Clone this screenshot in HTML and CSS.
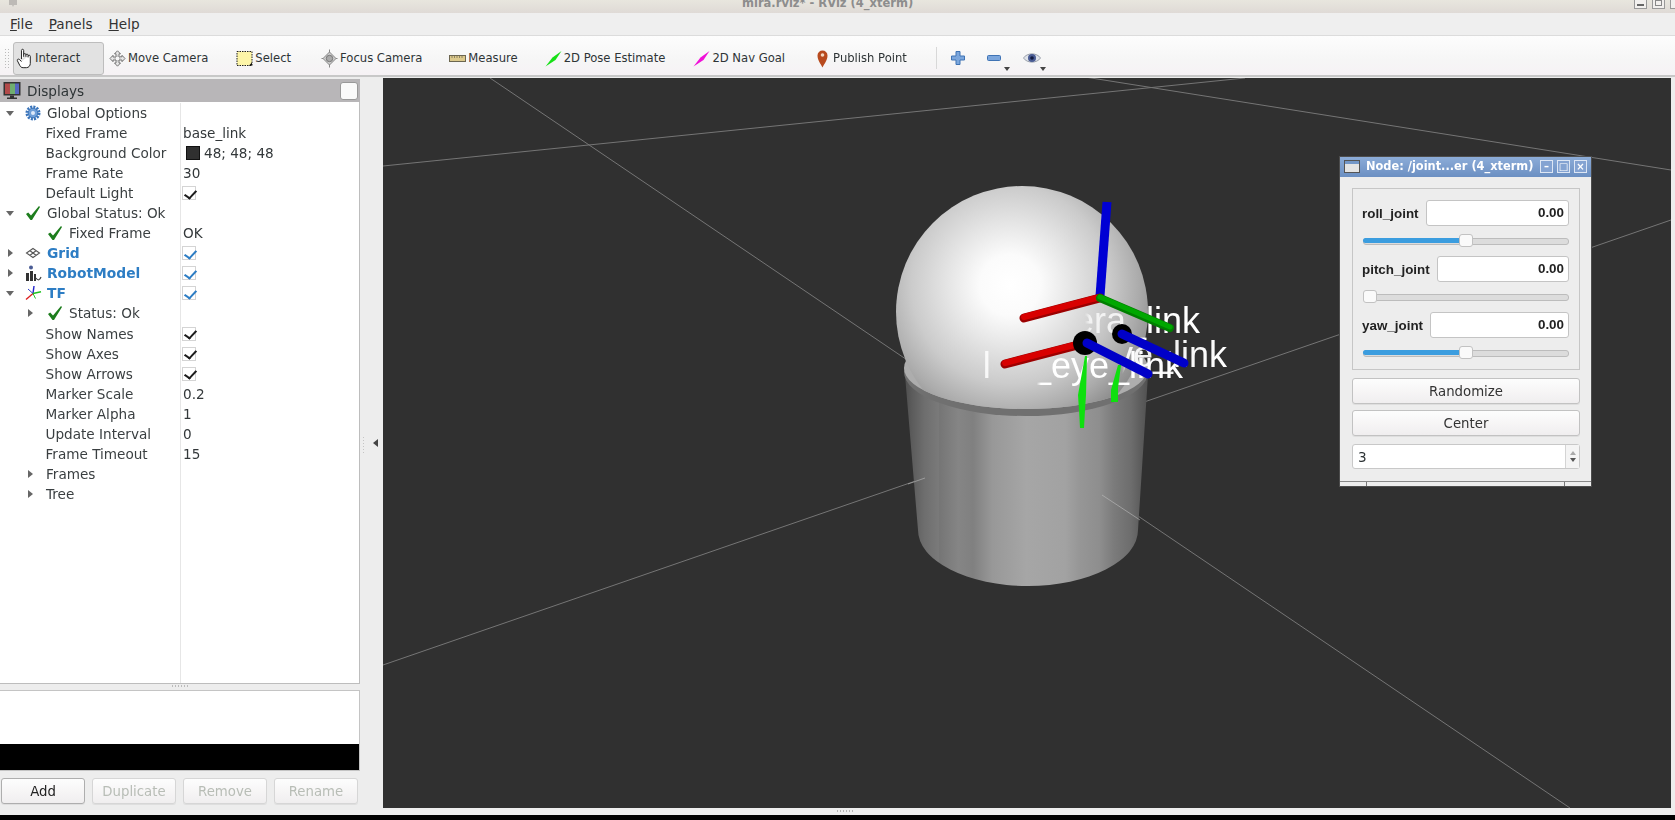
FILE: index.html
```html
<!DOCTYPE html>
<html lang="en">
<head>
<meta charset="utf-8">
<title>mira.rviz* - RViz (4_xterm)</title>
<link rel="stylesheet" href="styles.css">
</head>
<body>
<div class="app">
  <header class="titlebar">
    <svg class="tb-logo" width="10" height="7" viewBox="0 0 10 7"><path d="M1 0h8v5H6l-1 2-1-2H1z" fill="#bdbab6"/></svg>
    <span class="tb-title">mira.rviz* - RViz (4_xterm)</span>
    <span class="wm-btns"><span class="wm-btn"><i class="wm-min"></i></span><span class="wm-btn"><i class="wm-rest"></i></span><span class="wm-btn wm-cut"></span></span>
  </header>
  <nav class="menubar">
    <span><u>F</u>ile</span><span><u>P</u>anels</span><span><u>H</u>elp</span>
  </nav>
  <div class="toolbar">
    <span class="grip"></span>
    <div class="tool tool-active">
      <svg width="17" height="21" viewBox="0 0 14.500 19"><path d="M4.500 10V2.200c0-1.400 2-1.400 2 0V8m0-2c0-1.300 2-1.300 2 0v2m0-1.500c0-1.300 2-1.300 2 0V8.500m0-1c0-1.300 2-1.300 2 0V14c0 2-1.500 3.800-3.500 3.800H6c-1.500 0-2.400-.8-3-2L.8 11.500c-.5-1.300 1-2 2-1l1.700 1.800" fill="#fff" stroke="#222" stroke-width=".9"/></svg>
      <span>Interact</span>
    </div>
    <div class="tool tool-move">
      <svg width="17" height="17" viewBox="0 0 17 17"><path d="M8.500.8l3 3H10v3h3V5.300l3 3.200-3 3.200V10h-3v3h1.500l-3 3.200-3-3.200H7v-3H4v1.700L1 8.500l3-3.200V7h3V3.800H5.500z" fill="#e6e6e6" stroke="#6a6a6a" stroke-width=".9"/><circle cx="8.500" cy="8.500" r="2.400" fill="#f6f6f6" stroke="#888" stroke-width=".7"/></svg>
      <span>Move Camera</span>
    </div>
    <div class="tool">
      <svg width="17" height="17" viewBox="0 0 17 17"><rect x="1" y="1.500" width="15" height="14" fill="#fdf5a8" stroke="#222" stroke-dasharray="1.500 1"/><path d="M13 15.500l3-3v3z" fill="#111"/></svg>
      <span>Select</span>
    </div>
    <div class="tool tool-focus">
      <svg width="17" height="19" viewBox="0 0 17 19"><path d="M8.500.5v18M.5 9.500h16" stroke="#888"/><path d="M8.500 3l6.500 6.500-6.500 6.500L2 9.500z" fill="#ccc" stroke="#888"/><circle cx="8.500" cy="9.500" r="3.200" fill="#aaa" stroke="#777"/></svg>
      <span>Focus Camera</span>
    </div>
    <div class="tool tool-measure">
      <svg width="17" height="17" viewBox="0 0 17 17"><rect x=".5" y="5.500" width="16" height="6" fill="#dcc98c" stroke="#6c6650"/><path d="M3 6v2M5.500 6v2M8 6v2M10.500 6v2M13 6v2" stroke="#6c6650" stroke-width=".7"/></svg>
      <span>Measure</span>
    </div>
    <div class="tool tool-pose">
      <svg width="17" height="17" viewBox="0 0 17 17"><path d="M.5 16.500L7.500 7.500 16.500 1 10.500 10z" fill="#16e016"/></svg>
      <span>2D Pose Estimate</span>
    </div>
    <div class="tool">
      <svg width="17" height="17" viewBox="0 0 17 17"><path d="M.5 16.500L7.500 7.500 16.500 1 10.500 10z" fill="#f010d8"/></svg>
      <span>2D Nav Goal</span>
    </div>
    <div class="tool tool-pin">
      <svg width="17" height="19" viewBox="0 0 17 19"><path d="M8.500 18.500C6.500 14.500 3.500 11 3.500 6.500a5 5 0 0 1 10 0C13.500 11 10.500 14.500 8.500 18.500z" fill="#b84a1e"/><circle cx="8.500" cy="6" r="1.800" fill="#f4d8c0"/></svg>
      <span>Publish Point</span>
    </div>
    <span class="tb-sep"></span>
    <div class="tb-icon">
      <svg width="14" height="14" viewBox="0 0 14 14"><path d="M5 .5h4v4.500h4.500v4H9v4.500H5V9H.5V5H5z" fill="#7ba6dc" stroke="#3f73b4"/></svg>
    </div>
    <div class="tb-icon">
      <svg width="14" height="14" viewBox="0 0 14 14"><rect x=".5" y="4.500" width="13" height="5" rx="1" fill="#7ba6dc" stroke="#3f73b4"/></svg>
      <i class="drop"></i>
    </div>
    <div class="tb-icon">
      <svg width="18" height="14" viewBox="0 0 18 14"><path d="M.5 7C4 1.500 14 1.500 17.500 7 14 12.500 4 12.500.5 7z" fill="#dfe3ea" stroke="#9aa0ab"/><circle cx="9" cy="7" r="4" fill="#4a5c94"/><circle cx="9" cy="7" r="1.800" fill="#111a40"/></svg>
      <i class="drop"></i>
    </div>
  </div>
  <main class="main">
    <aside class="dock">
      <div class="dock-head">
        <svg width="18" height="20" viewBox="0 0 18 20"><rect x=".5" y="1" width="17" height="13.500" fill="#333"/><rect x="2" y="2.500" width="5" height="10.500" fill="#b24a4a"/><rect x="7" y="2.500" width="5" height="10.500" fill="#6fae6f"/><rect x="12" y="2.500" width="4" height="10.500" fill="#5566c0"/><path d="M7 14.500h4v2h3v1.500H4v-1.500h3z" fill="#333"/></svg>
        <span class="dock-title">Displays</span>
        <span class="dock-float"></span>
      </div>
      <div class="tree">
        <div class="row"><div class="name"><i class="tw open"></i><span class="ic">
          <svg width="16" height="16" viewBox="0 0 16 16"><circle cx="8" cy="8" r="6" fill="none" stroke="#3a74ba" stroke-width="3" stroke-dasharray="2 1.100"/><circle cx="8" cy="8" r="4.800" fill="#6f9fd8" stroke="#3a74ba"/><circle cx="8" cy="8" r="2" fill="#dfeafa"/></svg></span><span>Global Options</span></div><div class="val"></div></div>
        <div class="row"><div class="name lv1"><span>Fixed Frame</span></div><div class="val">base_link</div></div>
        <div class="row"><div class="name lv1"><span>Background Color</span></div><div class="val"><i class="swatch"></i>48; 48; 48</div></div>
        <div class="row"><div class="name lv1"><span>Frame Rate</span></div><div class="val">30</div></div>
        <div class="row"><div class="name lv1"><span>Default Light</span></div><div class="val"><i class="cb"></i></div></div>
        <div class="row"><div class="name"><i class="tw open"></i><span class="ic"><svg width="16" height="16" viewBox="0 0 16 16"><path d="M1 9l2.200-1.500L6 10.500 14 1l1 1-8 13h-1.500z" fill="#1d7d1d"/></svg></span><span>Global Status: Ok</span></div><div class="val"></div></div>
        <div class="row"><div class="name lv2"><span class="ic2"><svg width="16" height="16" viewBox="0 0 16 16"><path d="M1 9l2.200-1.500L6 10.500 14 1l1 1-8 13h-1.500z" fill="#1d7d1d"/></svg></span><span>Fixed Frame</span></div><div class="val">OK</div></div>
        <div class="row"><div class="name"><i class="tw"></i><span class="ic"><svg width="16" height="12" viewBox="0 0 16 12"><path d="M8 1.500l6.500 4.500L8 10.500 1.500 6zM5 3.800L11 8.300M11 3.800L5 8.300" fill="none" stroke="#555" stroke-width="1.100"/></svg></span><span class="on">Grid</span></div><div class="val"><i class="cb cb-on"></i></div></div>
        <div class="row"><div class="name"><i class="tw"></i><span class="ic"><svg width="17" height="17" viewBox="0 0 17 17"><circle cx="6" cy="2.500" r="2" fill="#4a5c94"/><path d="M1 16V8h3v8zM5 6h3v10H5zM9 9h2v7H9z" fill="#333"/><path d="M11 13c2 3 4 2 5-1" fill="none" stroke="#444" stroke-width="1.200"/></svg></span><span class="on">RobotModel</span></div><div class="val"><i class="cb cb-on"></i></div></div>
        <div class="row"><div class="name"><i class="tw open"></i><span class="ic"><svg width="18" height="16" viewBox="0 0 18 16"><path d="M8 8.500L9 1" stroke="#2222cc" stroke-width="1.400"/><path d="M8 8.500l8-1.800" stroke="#1fc41f" stroke-width="1.400"/><path d="M8 8.500L1 14.500" stroke="#dd1f1f" stroke-width="1.400"/><path d="M8 8.500L3 4" stroke="#3344cc" stroke-width="1"/><path d="M8 8.500l2.500 5" stroke="#1fc41f" stroke-width="1"/></svg></span><span class="on">TF</span></div><div class="val"><i class="cb cb-on"></i></div></div>
        <div class="row"><div class="name lv2"><i class="tw tw2"></i><span class="ic2"><svg width="16" height="16" viewBox="0 0 16 16"><path d="M1 9l2.200-1.500L6 10.500 14 1l1 1-8 13h-1.500z" fill="#1d7d1d"/></svg></span><span>Status: Ok</span></div><div class="val"></div></div>
        <div class="row"><div class="name lv1"><span>Show Names</span></div><div class="val"><i class="cb"></i></div></div>
        <div class="row"><div class="name lv1"><span>Show Axes</span></div><div class="val"><i class="cb"></i></div></div>
        <div class="row"><div class="name lv1"><span>Show Arrows</span></div><div class="val"><i class="cb"></i></div></div>
        <div class="row"><div class="name lv1"><span>Marker Scale</span></div><div class="val">0.2</div></div>
        <div class="row"><div class="name lv1"><span>Marker Alpha</span></div><div class="val">1</div></div>
        <div class="row"><div class="name lv1"><span>Update Interval</span></div><div class="val">0</div></div>
        <div class="row"><div class="name lv1"><span>Frame Timeout</span></div><div class="val">15</div></div>
        <div class="row"><div class="name lv1b"><i class="tw tw2"></i><span>Frames</span></div><div class="val"></div></div>
        <div class="row"><div class="name lv1b"><i class="tw tw2"></i><span>Tree</span></div><div class="val"></div></div>
        <div class="row row-fill"><div class="name"></div><div class="val"></div></div>
      </div>
      <div class="hgrip"></div>
      <div class="log"><div class="log-white"></div><div class="log-black"></div></div>
      <div class="dock-btns">
        <button class="btn btn-main">Add</button>
        <button class="btn" disabled>Duplicate</button>
        <button class="btn" disabled>Remove</button>
        <button class="btn" disabled>Rename</button>
      </div>
    </aside>
    <div class="vsplit"><i class="vgrip"></i><i class="collapse"></i></div>
    <section class="viewport">
      <svg class="scene" viewBox="383 78 1288 730" width="1288" height="730">
        <defs>
          <linearGradient id="cyl" x1="0" x2="1" y1="0" y2="0">
            <stop offset="0" stop-color="#4f4f4f"/>
            <stop offset=".03" stop-color="#5c5c5c"/>
            <stop offset=".08" stop-color="#6e6e6e"/>
            <stop offset=".14" stop-color="#7a7a7a"/>
            <stop offset=".14" stop-color="#757575"/>
            <stop offset=".22" stop-color="#858585"/>
            <stop offset=".28" stop-color="#808080"/>
            <stop offset=".36" stop-color="#989898"/>
            <stop offset=".5" stop-color="#a6a6a6"/>
            <stop offset=".66" stop-color="#a2a2a2"/>
            <stop offset=".72" stop-color="#969696"/>
            <stop offset=".8" stop-color="#8e8e8e"/>
            <stop offset=".86" stop-color="#7b7b7b"/>
            <stop offset=".93" stop-color="#6d6d6d"/>
            <stop offset="1" stop-color="#505050"/>
          </linearGradient>
          <radialGradient id="ball" gradientUnits="userSpaceOnUse" cx="1010" cy="285" r="152">
            <stop offset="0" stop-color="#fff"/>
            <stop offset=".2" stop-color="#fbfbfb"/>
            <stop offset=".4" stop-color="#e6e6e6"/>
            <stop offset=".65" stop-color="#cbcbcb"/>
            <stop offset=".85" stop-color="#ababab"/>
            <stop offset="1" stop-color="#8c8c8c"/>
          </radialGradient>
          <linearGradient id="t-cam" gradientUnits="userSpaceOnUse" x1="960" x2="1200" y1="0" y2="0">
            <stop offset=".52" stop-color="#fff" stop-opacity="0"/>
            <stop offset=".54" stop-color="#fff" stop-opacity=".7"/>
            <stop offset=".68" stop-color="#fff" stop-opacity=".85"/>
            <stop offset=".72" stop-color="#fff"/>
          </linearGradient>
          <linearGradient id="t-right" gradientUnits="userSpaceOnUse" x1="960" x2="1230" y1="0" y2="0">
            <stop offset=".6" stop-color="#fff" stop-opacity="0"/>
            <stop offset=".62" stop-color="#fff" stop-opacity=".9"/>
            <stop offset="1" stop-color="#fff"/>
          </linearGradient>
          <linearGradient id="t-left" gradientUnits="userSpaceOnUse" x1="980" x2="1190" y1="0" y2="0">
            <stop offset="0" stop-color="#fff" stop-opacity=".85"/>
            <stop offset=".05" stop-color="#fff" stop-opacity=".85"/>
            <stop offset=".06" stop-color="#fff" stop-opacity="0"/>
            <stop offset=".27" stop-color="#fff" stop-opacity="0"/>
            <stop offset=".29" stop-color="#fff"/>
          </linearGradient>
          <clipPath id="ballclip"><path d="M880 170H1170V368H1148A122 41 0 0 1 904 368H880z"/></clipPath>
        </defs>
        <g class="grid-lines">
          <line x1="490" y1="78" x2="1570" y2="808"/>
          <line x1="383" y1="166" x2="1245" y2="78"/>
          <line x1="1088" y1="77.500" x2="1671" y2="170"/>
          <line x1="383" y1="665" x2="1671" y2="220"/>
        </g>
        <path d="M905 375L918 530A110 56 0 0 0 1138 530L1148 375z" fill="url(#cyl)"/>
        <g class="grid-lines grid-faint">
          <line x1="908" y1="484" x2="925" y2="478"/>
          <line x1="1102" y1="495" x2="1140" y2="520"/>
        </g>
        <ellipse cx="1026" cy="372" rx="122" ry="44" fill="#707070"/>
        <ellipse cx="1026" cy="368" rx="122" ry="41" fill="#adadad"/>
        <circle cx="1022" cy="312" r="126" fill="url(#ball)" clip-path="url(#ballclip)"/>
        <g class="labels">
          <text x="1200" y="333" text-anchor="end" fill="url(#t-cam)">camera_link</text>
          <text x="1227" y="367" text-anchor="end" fill="url(#t-right)">right_eye_link</text>
          <text x="1183" y="378" text-anchor="end" fill="url(#t-left)">left_eye_link</text>
        </g>
        <g class="axes">
          <path d="M1085 356h2l-1 39-1 15-1 18h-4l-1-18-1-15z" fill="#0fe00f"/>
          <path d="M1118 365h3l-3 23v14h-7v-12z" fill="#0fe00f"/>
          <circle cx="1122" cy="334" r="10" fill="#000"/>
          <line x1="1122" y1="334" x2="1184" y2="363" stroke="#0000c8" stroke-width="9"/>
          <line x1="1005" y1="364" x2="1078" y2="345" stroke="#9c0000" stroke-width="9"/>
          <line x1="1005" y1="363" x2="1078" y2="344" stroke="#d80000" stroke-width="6"/>
          <circle cx="1085" cy="343" r="12" fill="#000"/>
          <line x1="1087" y1="343" x2="1148" y2="374" stroke="#0000c8" stroke-width="9"/>
          <line class="flat" x1="1107" y1="202" x2="1100" y2="296" stroke="#0000d4" stroke-width="9"/>
          <line x1="1024" y1="318" x2="1100" y2="298" stroke="#9c0000" stroke-width="9"/>
          <line x1="1024" y1="317" x2="1100" y2="297" stroke="#d80000" stroke-width="6"/>
          <line x1="1100" y1="298" x2="1170" y2="328" stroke="#007f00" stroke-width="8"/>
          <line x1="1100" y1="297" x2="1170" y2="327" stroke="#00a800" stroke-width="5"/>
        </g>
      </svg>
      <div class="node-win">
        <div class="nw-title">
          <svg width="16" height="13" viewBox="0 0 16 13"><rect x=".5" y=".5" width="15" height="12" fill="#e4e4e4" stroke="#555"/><rect x="1" y="1" width="14" height="3" fill="#7397c8"/></svg>
          <span class="nw-text">Node: /joint...er (4_xterm)</span>
          <span class="nw-btn">&#x2013;</span><span class="nw-btn">&#x25A1;</span><span class="nw-btn">&#x00D7;</span>
        </div>
        <div class="nw-body">
          <div class="grp">
            <div class="joint"><label>roll_joint</label><div class="num">0.00</div></div>
            <div class="slider"><i class="fill half"></i><i class="thumb"></i></div>
            <div class="joint"><label>pitch_joint</label><div class="num">0.00</div></div>
            <div class="slider"><i class="thumb"></i></div>
            <div class="joint"><label>yaw_joint</label><div class="num">0.00</div></div>
            <div class="slider"><i class="fill half"></i><i class="thumb"></i></div>
          </div>
          <button class="btn nw-wide">Randomize</button>
          <button class="btn nw-wide">Center</button>
          <div class="spin"><span>3</span><span class="spin-arrows"><i class="sp-up"></i><i class="sp-down"></i></span></div>
        </div>
        <div class="nw-foot"><i></i><i></i></div>
      </div>
    </section>
    <i class="bgrip"></i>
  </main>
  <footer class="blackbar"></footer>
</div>
</body>
</html>
```
FILE: styles.css
```css
* { box-sizing: border-box; }
html, body { margin: 0; padding: 0; height: 100%; overflow: hidden; background: #ededed; }
body { font-family: "DejaVu Sans", sans-serif; font-size: 13.6px; color: #2e3436; }
i { display: block; }
.app { width: 1675px; height: 820px; display: flex; flex-direction: column; filter: blur(.5px); }

.titlebar { height: 13px; flex: none; display: flex; align-items: flex-start; overflow: hidden; background: linear-gradient(#e8e6de, #dfdad6); position: relative; padding-left: 8px; }
.tb-logo { flex: none; }
.tb-title { margin-left: 724px; font-weight: 700; font-size: 11.500px; line-height: 7px; color: #8d8d8d; white-space: nowrap; }
.wm-btns { margin-left: auto; display: flex; gap: 5px; margin-right: -8px; }
.wm-btn { width: 13px; height: 9px; background: #f2f0ee; border: 1px solid #999; border-top: 0; display: block; }
.wm-min { width: 7px; height: 2px; background: #666; margin: 4px 0 0 2px; }
.wm-rest { width: 7px; height: 6px; border: 1px solid #888; margin: 0 0 0 2px; }

.menubar { height: 23px; flex: none; display: flex; align-items: center; padding-left: 10px; gap: 16px; background: #efefef; border-bottom: 1px solid #dcdcdc; font-size: 13.6px; color: #333; }

.toolbar { height: 41px; flex: none; display: flex; align-items: center; padding-top: 5px; font-size: 11.6px; color: #2e3436; background: linear-gradient(#fdfdfd 0, #f6f6f6 60%, #f6f2f5 100%); border-bottom: 2px solid #c8c8c8; padding-left: 4px; }
.grip { width: 5px; height: 20px; flex: none; background-image: radial-gradient(#bbb 1px, transparent 1px); background-size: 3px 3px; }
.tool { display: flex; align-items: center; gap: 2px; padding: 0 14px; height: 33px; flex: none; white-space: nowrap; }
.tool svg { flex: none; }
.tool-active { margin-left: 4px; width: 91px; padding: 0 0 0 2px; background: #e2e2e2; border: 1px solid #bdbdbd; border-radius: 3px; }
.tool-move { padding-left: 5px; }
.tool-focus { padding-left: 16px; }
.tool-measure { padding-left: 13px; }
.tool-pose { padding-left: 13px; }
.tool-pin { padding-left: 15px; }
.tb-sep { width: 1px; height: 22px; background: #d8d8d8; margin: 0 14px 0 15px; flex: none; }
.tb-icon { position: relative; width: 36px; height: 20px; flex: none; display: flex; align-items: center; }
.drop { position: absolute; right: 13px; bottom: -3px; border: 3px solid transparent; border-top: 4px solid #444; border-bottom: 0; }

.main { flex: 1; min-height: 0; display: flex; padding-bottom: 7px; background: #ededed; position: relative; }
.bgrip { position: absolute; left: 836px; bottom: 3px; width: 18px; height: 2px; background-image: radial-gradient(#b4b4b4 1px, transparent 1px); background-size: 3px 2px; }
.dock { width: 360px; flex: none; display: flex; flex-direction: column; padding-top: 2px; }
.dock-head { height: 23px; flex: none; display: flex; align-items: center; padding-left: 3px; background: #b8b6b8; }
.dock-title { margin-left: 6px; }
.dock-float { margin-left: auto; margin-right: 2px; width: 18px; height: 18px; background: #fafafa; border: 1px solid #999; border-radius: 3px; }

.tree { height: 582px; flex: none; padding-top: 1px; background: #fff; border-right: 1px solid #bdbdbd; border-bottom: 1px solid #bdbdbd; display: flex; flex-direction: column; overflow: hidden; }
.row { height: 20.06px; flex: none; display: flex; align-items: stretch; line-height: 20px; white-space: nowrap; }
.row-fill { flex: 1; }
.name { width: 181px; flex: none; display: flex; align-items: center; border-right: 1px solid #e6e6e6; color: #3a3f41; }
.lv1 { padding-left: 45.500px; }
.lv1b { padding-left: 20px; }
.lv2 { padding-left: 47px; position: relative; }
.val { flex: 1; padding-left: 2px; display: flex; align-items: center; color: #33383a; }
.tw { width: 20px; flex: none; height: 8px; position: relative; }
.tw::after { content: ""; position: absolute; left: 8px; top: 0; border-left: 5px solid #666; border-top: 4px solid transparent; border-bottom: 4px solid transparent; }
.tw.open::after { left: 6px; top: 2px; border-left: 4px solid transparent; border-right: 4px solid transparent; border-top: 5px solid #666; border-bottom: 0; }
.tw2 { width: 26px; }
.lv2 .tw2 { position: absolute; margin-left: -27px; width: 20px; }
.ic { width: 27px; flex: none; display: flex; align-items: center; padding-left: 5px; }
.ic2 { width: 22px; flex: none; display: flex; align-items: center; }
.on { font-weight: 700; color: #2d7dc4; font-size: 13.8px; }
.swatch { width: 14px; height: 14px; margin: 0 4px 0 3px; background: #303030; border: 1px solid #111; }
.cb { width: 14px; height: 14px; border: 1px solid #d4d4d4; background: #fff; position: relative; margin-left: -1px; }
.cb::after { content: ""; position: absolute; left: 3.500px; top: .5px; width: 5px; height: 9px; border-right: 2px solid #1c1c1c; border-bottom: 2px solid #1c1c1c; transform: rotate(35deg) skewX(-8deg); }
.cb-on::after { border-color: #2d7dc4; }

.hgrip { height: 6px; flex: none; position: relative; }
.hgrip::after { content: ""; position: absolute; left: 171px; top: 1px; width: 18px; height: 2px; background-image: radial-gradient(#bbb 1px, transparent 1px); background-size: 3px 2px; }
.log { height: 81px; flex: none; display: flex; flex-direction: column; border: 1px solid #c4c4c4; border-left: 0; }
.log-white { height: 53px; background: #fff; }
.log-black { flex: 1; background: #000; }
.dock-btns { margin-top: 7px; display: flex; gap: 7px; padding-left: 1px; }
.btn { width: 84px; height: 26px; font: inherit; font-size: 13.3px; color: #222; background: linear-gradient(#fdfdfd, #f0eeef); border: 1px solid #c2c2c2; border-radius: 3px; padding: 0; box-shadow: 0 1px 0 #dedede; }
.btn-main { border-color: #aeaeae; }
.btn:disabled { color: #b8bdb6; border-color: #d6d6d6; }

.vsplit { width: 23px; flex: none; position: relative; }
.vgrip { position: absolute; left: 2px; top: 359px; width: 3px; height: 18px; background-image: radial-gradient(#c4c4c4 1px, transparent 1px); background-size: 3px 3px; }
.collapse { position: absolute; left: 13px; top: 362px; border-right: 5px solid #444; border-top: 4px solid transparent; border-bottom: 4px solid transparent; }

.viewport { width: 1288px; flex: none; position: relative; background: #303030; margin-top: 1px; overflow: hidden; }
.scene { display: block; }
.grid-lines line { stroke: #757575; stroke-width: 1; }
.grid-faint line { stroke: #c2c2c2; stroke-opacity: .55; }
.labels text { font-family: "Liberation Sans", sans-serif; font-size: 36px; }
.axes line { stroke-linecap: round; }
.axes .flat { stroke-linecap: butt; }

.node-win { position: absolute; left: 956px; top: 78px; width: 253px; height: 331px; background: #ededed; border: 1px solid #4c4c4c; display: flex; flex-direction: column; }
.nw-title { height: 20px; flex: none; display: flex; align-items: center; padding: 0 4px 2px; gap: 6px; background: linear-gradient(#8cacd8, #6b8fc2); }
.nw-text { flex: 1; font-size: 11.4px; font-weight: 700; color: #fff; white-space: nowrap; }
.nw-btn { width: 13px; height: 13px; margin-left: -2px; background: #84a3d2; border: 1px solid #dde6f4; color: #fff; font-size: 10px; font-weight: 700; line-height: 11px; text-align: center; flex: none; }
.nw-body { flex: 1; padding: 11px 11px 0 12px; display: flex; flex-direction: column; }
.grp { height: 182px; flex: none; border: 1px solid #c6c6c6; padding: 11px 10px 0 9px; margin-bottom: 8px; }
.joint { height: 26px; display: flex; align-items: center; font-family: "Liberation Sans", sans-serif; font-size: 13.4px; font-weight: 700; color: #222; }
.joint label { margin-right: 7px; white-space: nowrap; }
.num { flex: 1; height: 26px; line-height: 24px; text-align: right; background: #fff; border: 1px solid #c4c4c4; border-radius: 3px; padding-right: 4px; }
.slider { height: 30px; position: relative; margin-left: 1px; }
.slider::before { content: ""; position: absolute; left: 0; right: 0; top: 12px; height: 5px; border: 1px solid #bcbcbc; border-radius: 3px; background: #dcdcdc; }
.fill { position: absolute; left: 0; top: 12px; height: 5px; border-radius: 3px; background: #3b9ddf; }
.half { width: 50%; }
.thumb { position: absolute; left: 0; top: 8px; width: 14px; height: 13px; background: #fafafa; border: 1px solid #c2c2c2; border-radius: 3px; }
.half + .thumb { left: 96px; }
.nw-wide { width: 100%; height: 26px; margin-bottom: 6px; flex: none; color: #333; }
.spin { height: 25px; flex: none; margin-top: 2px; display: flex; align-items: center; justify-content: space-between; padding-left: 5px; background: #fff; border: 1px solid #c8c8c8; border-radius: 3px; }
.spin-arrows { width: 14px; height: 100%; border-left: 1px solid #d4d4d4; background: #f4f4f4; display: flex; flex-direction: column; justify-content: center; align-items: center; gap: 3px; }
.sp-up { border: 3.500px solid transparent; border-top: 0; border-bottom: 4px solid #aaa; }
.sp-down { border: 3.500px solid transparent; border-bottom: 0; border-top: 4px solid #555; }
.nw-foot { height: 5px; flex: none; border-top: 1px solid #888; display: flex; justify-content: space-between; padding: 0 26px; }
.nw-foot i { width: 1px; background: #777; }

.blackbar { height: 5px; flex: none; background: #000; }
```
